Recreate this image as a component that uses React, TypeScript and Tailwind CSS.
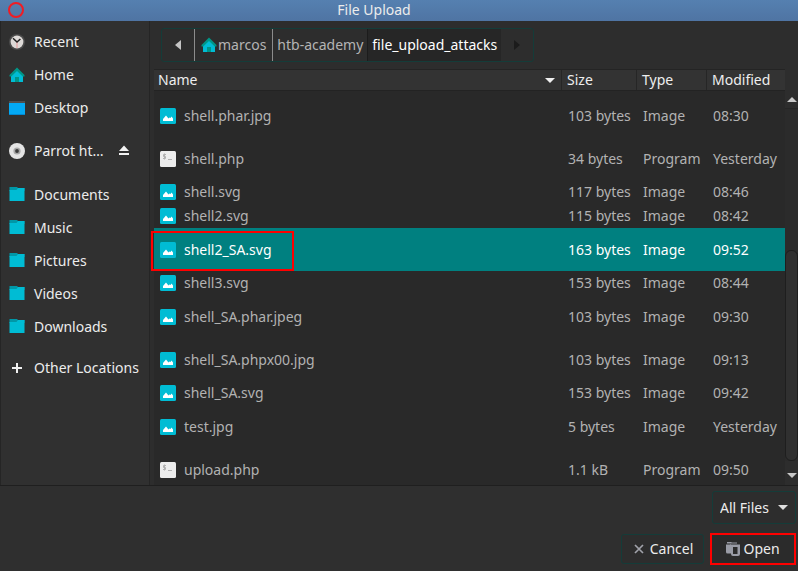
import React from "react";

type FileKind = "Image" | "Program";

interface FileEntry {
  name: string;
  size: string;
  kind: FileKind;
  modified: string;
  compact?: boolean;
  selected?: boolean;
}

const files: FileEntry[] = [
  { name: "shell.phar.jpg", size: "103 bytes", kind: "Image", modified: "08:30" },
  { name: "shell.php", size: "34 bytes", kind: "Program", modified: "Yesterday" },
  { name: "shell.svg", size: "117 bytes", kind: "Image", modified: "08:46", compact: true },
  { name: "shell2.svg", size: "115 bytes", kind: "Image", modified: "08:42", compact: true },
  { name: "shell2_SA.svg", size: "163 bytes", kind: "Image", modified: "09:52", selected: true },
  { name: "shell3.svg", size: "153 bytes", kind: "Image", modified: "08:44", compact: true },
  { name: "shell_SA.phar.jpeg", size: "103 bytes", kind: "Image", modified: "09:30" },
  { name: "shell_SA.phpx00.jpg", size: "103 bytes", kind: "Image", modified: "09:13" },
  { name: "shell_SA.svg", size: "153 bytes", kind: "Image", modified: "09:42", compact: true },
  { name: "test.jpg", size: "5 bytes", kind: "Image", modified: "Yesterday" },
  { name: "upload.php", size: "1.1 kB", kind: "Program", modified: "09:50" },
];

function ClockIcon() {
  return (
    <svg width="18" height="18" viewBox="0 0 18 18" aria-hidden="true">
      <circle cx="9" cy="9" r="8" fill="#4b4b4b" />
      <circle cx="9" cy="9" r="6.4" fill="#dedad8" />
      <path d="M9 9v6" stroke="#e89a9a" strokeWidth="1" />
      <path d="M5 5.2 9 9l3.4-3" stroke="#222" strokeWidth="1.5" fill="none" />
    </svg>
  );
}

function HomeIcon() {
  return (
    <svg width="16" height="16" viewBox="0 0 16 16" aria-hidden="true">
      <path d="M2 8 8 3l6 5v7H2z" fill="#00bcd4" />
      <path d="M8 .5 15.5 8v1.5h-1.7L8 4 2.2 9.5H.5V8z" fill="#009688" />
      <rect x="6" y="10" width="4" height="5" fill="#009688" />
    </svg>
  );
}

function DesktopIcon() {
  return (
    <svg width="16" height="14" viewBox="0 0 16 14" aria-hidden="true">
      <rect width="16" height="14" rx="0.5" fill="#03a9f4" />
      <rect width="16" height="2" fill="#4f4f4f" />
      <rect y="13" width="16" height="1" fill="#0288d1" />
    </svg>
  );
}

function DiscIcon() {
  return (
    <svg width="18" height="18" viewBox="0 0 18 18" aria-hidden="true">
      <circle cx="9" cy="9" r="8" fill="#e4e4e4" />
      <circle cx="9" cy="9" r="3.6" fill="#a8a8a8" />
      <circle cx="9" cy="9" r="1.9" fill="#3a3a3a" />
    </svg>
  );
}

function FolderIcon() {
  return (
    <svg width="16" height="16" viewBox="0 0 16 16" aria-hidden="true">
      <path d="M.5 0h8v1h7v3H.5z" fill="#0097a7" />
      <path d="M.5 3h7l1.500-2h6.500v13H.5z" fill="#00bcd4" />
    </svg>
  );
}

function PlusIcon() {
  return (
    <svg width="10" height="10" viewBox="0 0 10 10" aria-hidden="true">
      <path d="M5 0v10M0 5h10" stroke="#f0f0f0" strokeWidth="2" />
    </svg>
  );
}

function EjectIcon() {
  return (
    <svg width="12" height="11" viewBox="0 0 12 11" aria-hidden="true">
      <path d="M6 0.5 11 6H1zM1 8h10v2H1z" fill="#f2f2f2" />
    </svg>
  );
}

function ImageFileIcon() {
  return (
    <svg width="16" height="16" viewBox="0 0 16 16" aria-hidden="true">
      <rect width="16" height="16" rx="1.5" fill="#00bcd4" />
      <path d="M3 13v-2L6 7.500 8.500 10.500l1-1 1 .5 1-1.500 1.500 2V13z" fill="#fff" />
    </svg>
  );
}

function ScriptFileIcon() {
  return (
    <svg width="16" height="16" viewBox="0 0 16 16" aria-hidden="true">
      <rect width="16" height="16" rx="1.5" fill="#ececec" />
      <path
        d="M6 3.5H3.5v2h2v2H3M4.5 2.500v6M8 8.500h4"
        stroke="#b0b0b0"
        strokeWidth="1"
        fill="none"
      />
    </svg>
  );
}

function Arrow({ dir, tone }: { dir: "left" | "right" | "up" | "down"; tone: string }) {
  const shapes = {
    left: { w: 6, h: 10, d: "M6 0v10L0 5z" },
    right: { w: 6, h: 10, d: "M0 0v10l6-5z" },
    up: { w: 10, h: 5, d: "M0 5h10L5 0z" },
    down: { w: 10, h: 5, d: "M0 0h10L5 5z" },
  };
  const s = shapes[dir];
  return (
    <svg width={s.w} height={s.h} viewBox={`0 0 ${s.w} ${s.h}`} aria-hidden="true">
      <path d={s.d} fill={tone} />
    </svg>
  );
}

function CloseIcon() {
  return (
    <svg width="10" height="10" viewBox="0 0 10 10" aria-hidden="true">
      <path d="M1 1l8 8M9 1 1 9" stroke="#a0a2aa" strokeWidth="1.7" />
    </svg>
  );
}

function OpenIcon() {
  return (
    <svg width="14" height="14" viewBox="0 0 14 14" aria-hidden="true">
      <path d="M1 0h4l1 .5h5v1H1z" fill="#9a9ca6" />
      <path d="M0 2.500h5v9H1.500A1.500 1.500 0 0 1 0 10z" fill="#9a9ca6" />
      <path
        fillRule="evenodd"
        d="M4 2.500h10V12a2 2 0 0 1-2 2H7a2 2 0 0 1-2-2V5H4zM7 5v7h4.500V5z"
        fill="#9a9ca6"
      />
    </svg>
  );
}

function Place({ icon, label, eject }: { icon: React.ReactNode; label: string; eject?: boolean }) {
  return (
    <li className="flex h-[33px] items-center">
      <button type="button" className="flex h-full items-center gap-2">
        <span className="flex w-[18px] justify-center">{icon}</span>
        <span>{label}</span>
      </button>
      {eject && (
        <button type="button" aria-label="Eject" className="ml-[14px]">
          <EjectIcon />
        </button>
      )}
    </li>
  );
}

function Sidebar() {
  return (
    <nav
      aria-label="Places"
      className="flex w-[150px] shrink-0 flex-col border-x border-[#252525] bg-[#303030] pt-1 pl-[7px] whitespace-nowrap"
    >
      <ul>
        <Place icon={<ClockIcon />} label="Recent" />
        <Place icon={<HomeIcon />} label="Home" />
        <Place icon={<DesktopIcon />} label="Desktop" />
      </ul>
      <ul className="py-[10px]">
        <Place icon={<DiscIcon />} label="Parrot ht…" eject />
      </ul>
      <ul className="pt-px pb-2">
        {["Documents", "Music", "Pictures", "Videos", "Downloads"].map((name) => (
          <Place key={name} icon={<FolderIcon />} label={name} />
        ))}
      </ul>
      <ul>
        <Place icon={<PlusIcon />} label="Other Locations" />
      </ul>
    </nav>
  );
}

function PathBar() {
  return (
    <nav aria-label="Path" className="flex h-[48px] shrink-0 items-center pl-[11px]">
      <div className="flex h-[34px] items-stretch overflow-hidden rounded-[3px] border border-[#143c39] bg-[#2d2d2d] text-[#b4b4b4]">
        <button type="button" aria-label="Back" className="flex w-8 items-center justify-center">
          <Arrow dir="left" tone="#c4c4c4" />
        </button>
        <button type="button" className="flex items-center gap-px border-l border-[#8c8c8c] px-[6px]">
          <HomeIcon />
          <span>marcos</span>
        </button>
        <button type="button" className="border-l border-[#8c8c8c] px-1">
          htb-academy
        </button>
        <button
          type="button"
          aria-current="page"
          className="border-l border-[#1c1c1c] bg-[#262626] px-1 text-white"
        >
          file_upload_attacks
        </button>
        <button type="button" aria-label="Forward" disabled className="flex w-8 items-center justify-center">
          <Arrow dir="right" tone="#1b1b1b" />
        </button>
      </div>
    </nav>
  );
}

function FileTable() {
  const head = "border-b border-[#232323] bg-[#333333] p-0 text-left font-normal";
  return (
    <table className="w-full table-fixed border-separate border-spacing-0 whitespace-nowrap">
      <colgroup>
        <col />
        <col className="w-[75px]" />
        <col className="w-[70px]" />
        <col className="w-[79px]" />
      </colgroup>
      <thead className="text-[#eeeeee]">
        <tr className="h-[21px] leading-5">
          <th scope="col" className={head}>
            <div className="flex items-center justify-between pr-[6px] pl-1">
              Name
              <Arrow dir="down" tone="#f0f0f0" />
            </div>
          </th>
          <th scope="col" className={head}>
            <div className="border-l border-[#262626] pl-[5px]">Size</div>
          </th>
          <th scope="col" className={head}>
            <div className="border-l border-[#262626] pl-[5px]">Type</div>
          </th>
          <th scope="col" className={head}>
            <div className="border-l border-[#262626] pl-[5px]">Modified</div>
          </th>
        </tr>
      </thead>
      <tbody className="leading-5 text-[#b2b2b2]">
        <tr aria-hidden="true" className="h-[3px]">
          <td colSpan={4} className="p-0" />
        </tr>
        {files.map((f) => (
          <tr
            key={f.name}
            aria-selected={f.selected ?? false}
            className={`${f.compact ? "h-6" : "h-[43px]"} ${f.selected ? "bg-[#008080] text-white" : ""}`}
          >
            <td className="relative p-0 pl-[6px]">
              <span className="flex items-center gap-2">
                {f.kind === "Image" ? <ImageFileIcon /> : <ScriptFileIcon />}
                {f.name}
              </span>
              {f.selected && (
                <span className="absolute top-[3px] -left-[3px] h-10 w-[143px] border-2 border-[#ff0000]" />
              )}
            </td>
            <td className="p-0 pl-[7px]">{f.size}</td>
            <td className="p-0 pl-[7px]">{f.kind}</td>
            <td className="p-0 pl-[7px]">{f.modified}</td>
          </tr>
        ))}
      </tbody>
    </table>
  );
}

function ScrollTrack() {
  return (
    <div aria-hidden="true" className="flex w-[13px] shrink-0 flex-col pt-[22px]">
      <div className="flex h-[18px] items-center justify-center border-b border-[#262626]">
        <Arrow dir="up" tone="#c8c8c8" />
      </div>
      <div className="flex grow flex-col justify-end bg-[#2b2b2b]">
        <div className="h-[60%] rounded-md border border-[#1e1e1e] bg-[#303030]" />
      </div>
      <div className="flex h-6 items-center justify-center pt-1">
        <Arrow dir="down" tone="#c8c8c8" />
      </div>
    </div>
  );
}

export default function App() {
  return (
    <div className="flex h-screen flex-col overflow-hidden bg-[#2f2f2f] font-['Noto_Sans',sans-serif] text-sm leading-5 text-[#ececec]">
      <header className="relative flex h-[21px] shrink-0 items-start justify-center bg-linear-to-b from-[#5580b0] to-[#4f74a3]">
        <button
          type="button"
          aria-label="Close window"
          className="absolute top-[2px] left-2 size-4 rounded-full border-2 border-[#f01c24]"
        />
        <h1 className="pr-[50px]">File Upload</h1>
      </header>

      <div className="flex min-h-0 grow">
        <Sidebar />
        <main className="flex min-w-0 grow flex-col bg-[#2d2d2d]">
          <PathBar />
          <div className="flex min-h-0 grow">
            <div className="min-w-0 grow overflow-hidden pl-1">
              <div className="min-h-full border-t border-[#242424] bg-[#292929]">
                <FileTable />
              </div>
            </div>
            <ScrollTrack />
          </div>
        </main>
      </div>

      <footer className="flex shrink-0 flex-col items-end gap-[9px] border-t border-[#1f1f1f] px-[2px] pt-[5px] pb-[6px]">
        <div className="relative flex items-center">
          <select
            aria-label="File filter"
            className="h-[33px] w-[84px] appearance-none rounded-[3px] border border-[#143c39] bg-[#2d2d2d] pl-[7px]"
          >
            <option>All Files</option>
          </select>
          <span className="pointer-events-none absolute right-2">
            <Arrow dir="down" tone="#dedede" />
          </span>
        </div>
        <div className="flex items-center gap-[6px]">
          <button
            type="button"
            className="flex h-[30px] w-[83px] items-center justify-center gap-[6px] rounded-[3px] border border-[#143c39] bg-[#2d2d2d] pl-[2px]"
          >
            <CloseIcon />
            Cancel
          </button>
          <button
            type="button"
            className="flex h-8 w-[86px] items-center justify-center gap-[3px] border-2 border-[#ff0000] bg-[#2b2b2b]"
          >
            <OpenIcon />
            Open
          </button>
        </div>
      </footer>
    </div>
  );
}
